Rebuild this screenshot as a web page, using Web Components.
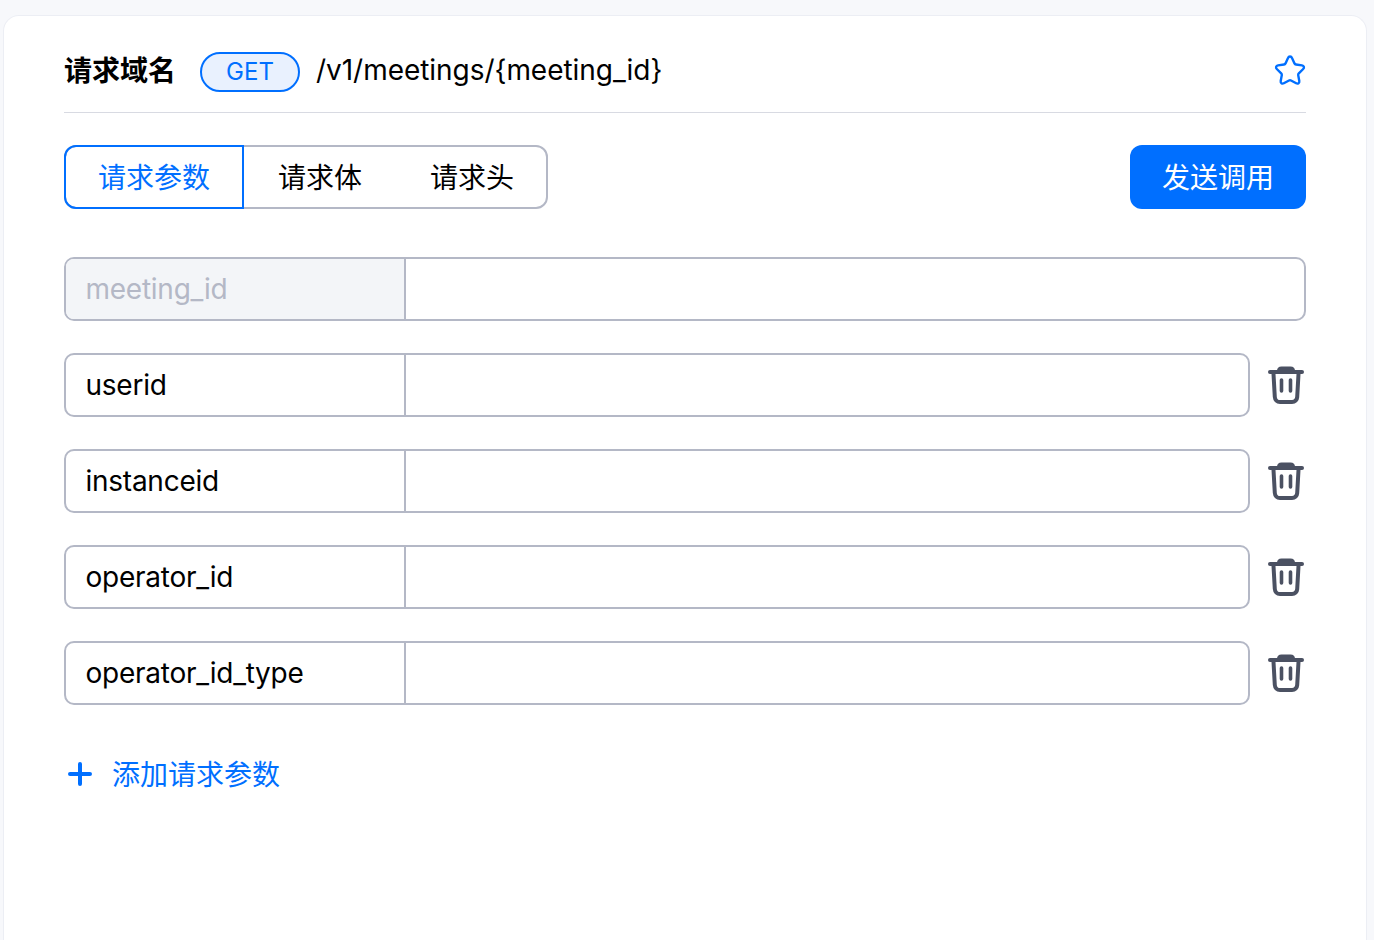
<!DOCTYPE html>
<html lang="zh">
<head>
<meta charset="utf-8">
<title>请求参数</title>
<style>
  html, body { margin: 0; height: 100%; }
  body {
    background: #f7f8fb;
    font-family: "Inter", "Noto Sans CJK SC", sans-serif;
    color: #000;
    overflow: hidden;
  }
</style>
</head>
<body>
<api-panel>
  <api-header method="GET" path="/v1/meetings/{meeting_id}">请求域名</api-header>
  <api-toolbar></api-toolbar>
  <param-row name="meeting_id" locked></param-row>
  <param-row name="userid"></param-row>
  <param-row name="instanceid"></param-row>
  <param-row name="operator_id"></param-row>
  <param-row name="operator_id_type"></param-row>
  <add-param>添加请求参数</add-param>
</api-panel>

<script>
class ApiPanel extends HTMLElement {
    constructor() {
        super();
        this.attachShadow({ mode: 'open' });
        this.shadowRoot.innerHTML = `
            <style>
                :host {
                    display: flex;
                    flex-direction: column;
                    box-sizing: border-box;
                    height: 925px;
                    margin: 15px 7px 0 3px;
                    padding: 0 60px;
                    background: #fff;
                    border: solid #eceef4;
                    border-width: 1px 1px 0 1px;
                    border-radius: 16px 16px 0 0;
                }
            </style>
            <slot></slot>
        `;
    }
}

class ApiHeader extends HTMLElement {
    constructor() {
        super();
        this.attachShadow({ mode: 'open' });
    }

    connectedCallback() {
        this.shadowRoot.innerHTML = `
            <style>
                :host {
                    display: flex;
                    align-items: center;
                    height: 97px;
                    padding-top: 11px;
                    box-sizing: border-box;
                    border-bottom: 1px solid #d8dae2;
                }
                .title { font-size: 28px; font-weight: 700; width: 136px; line-height: 40px; margin-top: 2px; flex: none; }
                .method {
                    box-sizing: border-box;
                    width: 100px;
                    height: 40px;
                    margin-top: 4px;
                    border: 2px solid #006fff;
                    border-radius: 20px;
                    background: #e9f1fe;
                    color: #006fff;
                    font-size: 24px;
                    display: flex;
                    align-items: center;
                    justify-content: center;
                }
                .path { font-size: 28px; margin-left: 16px; flex: 1; letter-spacing: -0.04px; }
                svg { display: block; margin-right: -1px; }
            </style>
            <span class="title"><slot></slot></span>
            <span class="method">${this.getAttribute('method')}</span>
            <span class="path">${this.getAttribute('path')}</span>
            <svg width="34" height="34" viewBox="0 0 34 34" fill="none" stroke="#006fff" stroke-width="2.4" stroke-linejoin="round">
                <path d="M17 3.5 C18 3.5 18.6 4 19 5 L21.5 10.4 C21.8 11 22.3 11.4 23 11.5 L29 12.4 C31 12.7 31.6 14.6 30.2 16 L25.8 20.3 C25.3 20.8 25.1 21.4 25.2 22.1 L26.3 28 C26.6 30 24.9 31.2 23.2 30.3 L18 27.5 C17.4 27.2 16.6 27.2 16 27.5 L10.8 30.3 C9.1 31.2 7.4 30 7.7 28 L8.8 22.1 C8.9 21.4 8.7 20.8 8.2 20.3 L3.8 16 C2.4 14.6 3 12.7 5 12.4 L11 11.5 C11.7 11.4 12.2 11 12.5 10.4 L15 5 C15.4 4 16 3.5 17 3.5 Z"/>
            </svg>
        `;
    }
}

class ApiToolbar extends HTMLElement {
    constructor() {
        super();
        this.attachShadow({ mode: 'open' });
        this.shadowRoot.innerHTML = `
            <style>
                :host {
                    display: flex;
                    justify-content: space-between;
                    margin: 32px 0 48px;
                }
                .tabs {
                    display: flex;
                    box-sizing: border-box;
                    height: 64px;
                    border: 2px solid #b4b8c6;
                    border-radius: 12px;
                }
                .tab {
                    font-size: 28px;
                    line-height: 62px;
                    height: 60px;
                    padding: 0 35px 0 34px;
                }
                .tab + .tab + .tab { padding: 0 32px 0 33px; }
                .tab.active {
                    margin: -2px 0 -2px -2px;
                    padding: 0 32px;
                    border: 2px solid #006fff;
                    border-radius: 12px 0 0 12px;
                    color: #006fff;
                }
                button {
                    width: 176px;
                    height: 64px;
                    border: 0;
                    border-radius: 12px;
                    background: #006fff;
                    color: #fff;
                    font: inherit;
                    font-size: 28px;
                    padding: 0 0 2px;
                }
            </style>
            <div class="tabs">
                <span class="tab active">请求参数</span>
                <span class="tab">请求体</span>
                <span class="tab">请求头</span>
            </div>
            <button>发送调用</button>
        `;
    }
}

class ParamRow extends HTMLElement {
    constructor() {
        super();
        this.attachShadow({ mode: 'open' });
    }

    connectedCallback() {
        const locked = this.hasAttribute('locked');
        this.shadowRoot.innerHTML = `
            <style>
                :host { display: flex; align-items: center; margin-bottom: 32px; }
                .field {
                    flex: 1;
                    display: flex;
                    box-sizing: border-box;
                    height: 64px;
                    border: 2px solid #b4b8c6;
                    border-radius: 10px;
                    overflow: hidden;
                }
                .name {
                    box-sizing: border-box;
                    width: 340px;
                    padding-left: 19.5px;
                    border-right: 2px solid #b4b8c6;
                    font-size: 28px;
                    line-height: 60px;
                    letter-spacing: -0.25px;
                }
                .name.locked { background: #f3f5f8; color: #b4b8c6; }
                .del { flex: none; width: 56px; display: flex; justify-content: flex-end; }
                svg { display: block; margin-right: 2px; }
            </style>
            <div class="field">
                <div class="name ${locked ? 'locked' : ''}">${this.getAttribute('name')}</div>
            </div>
            ${locked ? '' : `
            <div class="del">
                <svg width="36" height="38" viewBox="0 0 36 38" fill="none" stroke="#4b5162" stroke-linecap="round" stroke-linejoin="round">
                    <path d="M2 6 H34" stroke-width="4"/>
                    <path d="M10 5 C10 3 11.5 1.5 13.5 1.5 H22.5 C24.5 1.5 26 3 26 5 Z" fill="#4b5162" stroke-width="2"/>
                    <path d="M5.5 8 L6.8 31 C7 34 9 36 12 36 H24 C27 36 29 34 29.2 31 L30.5 8" stroke-width="4"/>
                    <path d="M13.5 14 V25 M22.5 14 V25" stroke-width="3.6"/>
                </svg>
            </div>`}
        `;
    }
}

class AddParam extends HTMLElement {
    constructor() {
        super();
        this.attachShadow({ mode: 'open' });
        this.shadowRoot.innerHTML = `
            <style>
                :host {
                    display: flex;
                    align-items: center;
                    gap: 20px;
                    margin-top: 18px;
                    padding-left: 4px;
                    color: #006fff;
                    font-size: 28px;
                    line-height: 40px;
                }
                svg { display: block; margin-bottom: 2px; }
            </style>
            <svg width="24" height="24" viewBox="0 0 24 24" stroke="#006fff" stroke-width="4" stroke-linecap="round">
                <path d="M2 12 H22 M12 2 V22"/>
            </svg>
            <span><slot></slot></span>
        `;
    }
}

customElements.define('api-panel', ApiPanel);
customElements.define('api-header', ApiHeader);
customElements.define('api-toolbar', ApiToolbar);
customElements.define('param-row', ParamRow);
customElements.define('add-param', AddParam);
</script>
</body>
</html>
